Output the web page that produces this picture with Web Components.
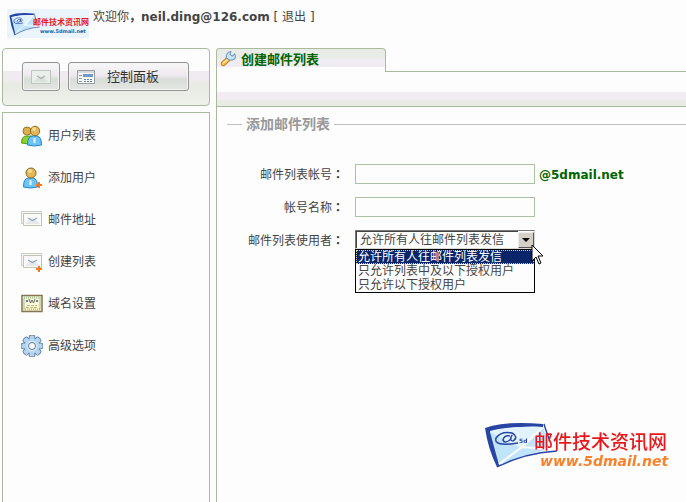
<!DOCTYPE html>
<html lang="zh-CN">
<head>
<meta charset="utf-8">
<title>创建邮件列表</title>
<style>
  html {
    background: #fdfdfd;
  }
  body {
    margin: 0;
    color: #444;
    font: 12px/16px "DejaVu Sans", "Noto Sans CJK SC", sans-serif;
    --line: #a9bb9c;
    --green: #006400;
  }
</style>
</head>
<body>
<mail-admin></mail-admin>

<script>
/* global customElements HTMLElement */
const envelope = `
  <path d="M1 7 Q20 0 59 3 L59 6 Q25 5 6 10 L17 44 L13 46 Q4 28 1 7Z" fill="#2845a5"/>
  <path d="M6 11 Q28 5 59 6 L66 28 Q40 34 15 44Z" fill="#bfe4fb"/>
  <path d="M6 11 Q28 5 59 6 L38 28Z" fill="#e3f3fd"/>
  <path d="M15 43 L38 26 L66 28 M38 26 L58 7" fill="none" stroke="#fff" stroke-width="2"/>
  <path d="M13 46 Q40 32 73 30 M60 3 Q62 10 66 20" fill="none" stroke="#2845a5" stroke-width="1.4"/>
  <path d="M26 15 Q20 14 19 19 Q20 23 26 19 L28 14 Q25 20 29 20 Q35 16 28 12 Q17 10 12 17 Q9 26 34 22" fill="none" stroke="#2845a5" stroke-width="1.5"/>`;

const userBody = (x, bottom, colour, edge) => `
  <path d="M${x} ${bottom} Q${x} 11 ${x + 5} 11 H${x + 9} Q${x + 14} 11 ${x + 14} ${bottom} Q${x + 7} ${bottom + 2} ${x} ${bottom}Z" fill="${colour}" stroke="${edge}"/>`;
const plus = '<path d="M18 15v6M15 18h6" stroke="#f47a20" stroke-width="2"/>';
const letters = `
  <path d="M.5 2.500h20v12h-20z" fill="#f6f6f6" stroke="#ccc"/>
  <path d="M2.500 4.500h18v12h-18z" fill="#fafafa" stroke="#bcc6b5"/>
  <path d="M4 15l5-5h5l5 5z" fill="#e6e8ea"/>
  <path d="M7 9l4.500 2.500L16 9" fill="none" stroke="#8fa5bb" stroke-width="1.300"/>`;

// eight rounded teeth round the wheel
const gearTeeth = Array.from({ length: 8 }, (_, i) => `
  <rect x="8.500" y=".5" width="5" height="6" rx="1.500" transform="rotate(${i * 45} 11 11)"/>`).join('');

const icons = {
  users: `
    ${userBody(0.5, 18, '#8fd02c', '#4e9c17')}
    <circle cx="6" cy="6" r="4" fill="#dcb04c" stroke="#a07820"/>
    ${userBody(6.5, 20, '#6cc5f6', '#2684cc')}
    <circle cx="14" cy="6" r="4.700" fill="#e3b85a" stroke="#8f6a20"/>
    <circle cx="13" cy="4" r="2" fill="#f6dc92"/>
    <path d="M13.500 13v5" stroke="#e6f7ff" stroke-width="2"/>`,
  adduser: `
    ${userBody(2.5, 20, '#6cc5f6', '#2684cc')}
    <circle cx="10" cy="6" r="5" fill="#e3b85a" stroke="#8f6a20"/>
    <circle cx="9" cy="4" r="2" fill="#f6dc92"/>
    <path d="M9.500 13v5" stroke="#e6f7ff" stroke-width="2"/>${plus}`,
  mails: letters,
  addmail: letters + plus,
  domain: `
    <path d="M1 2.500h20v16H1z" fill="#f8f5cd" stroke="#857654" stroke-width="1.500"/>
    <path d="M3 4.500h16v12H3z" fill="none" stroke="#a9c29a" stroke-width="2" stroke-dasharray="1 1"/>
    <path d="M5 6h12v9H5z" fill="#fbf9e0"/>
    <path d="M8 6l1.500 4L11 7l1.500 3L14 6" fill="none" stroke="#6c6840"/>
    <path d="M5 8h2M15 8h2" stroke="#5b79bd" stroke-width="2"/>
    <path d="M6 12.500h10M5 14.500h12" stroke="#cdb77b" stroke-dasharray="3 1"/>`,
  gear: `
    <g fill="#b4d3ee" stroke="#54779f" stroke-width="1.600">${gearTeeth}</g>
    <circle cx="11" cy="11" r="8" fill="#b4d3ee" stroke="#54779f" stroke-width="1.300"/>
    <g fill="#b4d3ee">${gearTeeth}</g>
    <circle cx="11" cy="11" r="5.500" fill="#d6e9f8"/>
    <circle cx="11" cy="11" r="3.500" fill="#fdfdfd" stroke="#54779f"/>`,
  wrench: `
    <path d="M9 10 L3 15 Q0 18 3 20 Q5 21 8 18 L13 13Z" fill="#f8c654" stroke="#c47a25" stroke-width="1.300"/>
    <path d="M4 17l6-5" stroke="#fdeaa8" stroke-width="1.500"/>
    <path d="M8 10 Q8 3 14 2 L13 6 L16 8 L19 5 Q22 11 16 13 L12 13Z" fill="#c9e5f7" stroke="#6997bd" stroke-width="1.300"/>`,
  envelope: `
    <path d="M1.500 4.500h19v13h-19z" fill="#ebefeb" stroke="#bcc4bc"/>
    <path d="M3 16l6-5h4l6 5z" fill="#dce1dc"/>
    <path d="M7 10l4 2.500L15 10" fill="none" stroke="#a9b0a9" stroke-width="1.400"/>`,
  panel: `
    <path d="M1.500 4.500h17v13h-17z" fill="#f6f7f7" stroke="#969b9b"/>
    <path d="M2 5h16v2H2z" fill="#d7dbdc"/>
    <path d="M7 8h10v3H7z" fill="#6f99cb"/>
    <path d="M3 9.500h3M3 12.500h3M3 15.500h3" stroke="#929a9a"/>
    <path d="M8 13.500h9M8 15.500h9" stroke="#6c7fa4" stroke-dasharray="2 1"/>`
};

class MailIcon extends HTMLElement {
  connectedCallback() {
    const shadowRoot = this.attachShadow({ mode: 'open' });
    shadowRoot.innerHTML = `
    <style>
      :host { display: block; flex: none; width: 22px; height: 22px; }
      svg { display: block; }
    </style>
    <svg viewBox="0 0 22 22" width="100%" height="100%" aria-hidden="true">${icons[this.getAttribute('name')]}</svg>`;
  }
}

class MailBrand extends HTMLElement {
  connectedCallback() {
    const shadowRoot = this.attachShadow({ mode: 'open' });
    const small = this.hasAttribute('small');
    shadowRoot.innerHTML = `
    <style>
      :host { display: block; flex: none; }
      :host([small]) { background: #eaf4fd; }
      svg { display: block; }
      .name { fill: #e8191c; font-family: "Noto Sans CJK SC", sans-serif; }
      .site { font-family: "DejaVu Sans", sans-serif; font-weight: bold; }
    </style>
    ${small ? `
    <svg width="82" height="29" viewBox="0 0 82 29">
      <g transform="translate(2 3) scale(.42 .5)">${envelope}</g>
      <text class="name" x="26" y="16" font-size="8" font-weight="bold">邮件技术资讯网</text>
      <text class="site" x="33" y="24" font-size="5" fill="#1263a4">www.5dmail.net</text>
    </svg>` : `
    <svg width="190" height="50" viewBox="0 0 190 50">
      ${envelope}
      <text x="35" y="22" font-size="6" font-weight="bold" fill="#2845a5" font-family="DejaVu Sans">5d</text>
      <text class="name" x="50" y="28" font-size="19" font-weight="500">邮件技术资讯网</text>
      <text class="site" x="56" y="45" font-size="14" font-style="italic" fill="#f9812a">www.5dmail.net</text>
    </svg>`}`;
  }
}

class MailHeader extends HTMLElement {
  connectedCallback() {
    const shadowRoot = this.attachShadow({ mode: 'open' });
    shadowRoot.innerHTML = `
    <style>
      :host { display: flex; gap: 4px; padding: 9px 7px 10px; }
      a { color: inherit; text-decoration: none; }
    </style>
    <mail-brand small></mail-brand>
    <div>欢迎你<b>，neil.ding@126.com</b> [ <a href="#logout">退出</a> ]</div>`;
  }
}

class MailToolbar extends HTMLElement {
  connectedCallback() {
    const shadowRoot = this.attachShadow({ mode: 'open' });
    shadowRoot.innerHTML = `
    <style>
      :host {
        display: flex;
        gap: 8px;
        padding: 13px 20px 14px 19px;
        border: 1px solid var(--line);
        border-radius: 4px;
        background: linear-gradient(#fdfdfd 22px, #f0ebf1 22px, #f0ebf1 30px, #e8ebe4 36px, #eef0ea);
      }
      button {
        display: flex;
        align-items: center;
        justify-content: center;
        height: 29px;
        padding: 0 7px;
        border: 1px solid #939593;
        border-radius: 3px;
        background: linear-gradient(#f8f8f8, #eee9ef 45%, #d9ddd8 60%, #e3e6e2);
        box-shadow: inset 0 0 0 1px #f5f5f5;
        color: #333;
        font: inherit;
        font-size: 13px;
      }
      .panel { flex: 1; justify-content: flex-start; gap: 9px; }
    </style>
    <button aria-label="邮件"><mail-icon name="envelope"></mail-icon></button>
    <button class="panel"><mail-icon name="panel"></mail-icon>控制面板</button>`;
  }
}

class MailMenu extends HTMLElement {
  connectedCallback() {
    const shadowRoot = this.attachShadow({ mode: 'open' });
    const items = [
      ['users', '用户列表'],
      ['adduser', '添加用户'],
      ['mails', '邮件地址'],
      ['addmail', '创建列表'],
      ['domain', '域名设置'],
      ['gear', '高级选项']
    ];
    shadowRoot.innerHTML = `
    <style>
      :host { display: block; flex: 1; padding: 12px 18px; border: 1px solid var(--line); border-bottom: 0; }
      nav { display: flex; flex-direction: column; gap: 20px; }
      a { display: flex; align-items: center; gap: 5px; color: inherit; text-decoration: none; }
    </style>
    <nav>${items.map(([icon, text]) => `
      <a href="#${icon}"><mail-icon name="${icon}"></mail-icon>${text}</a>`).join('')}
    </nav>`;
  }
}

class MailTab extends HTMLElement {
  connectedCallback() {
    const shadowRoot = this.attachShadow({ mode: 'open' });
    shadowRoot.innerHTML = `
    <style>
      :host { display: flex; height: 24px; }
      h1 {
        display: flex;
        box-sizing: border-box;
        width: 170px;
        gap: 4px;
        margin: 0;
        padding: 1px 3px;
        border: 1px solid var(--line);
        border-bottom: 0;
        border-radius: 4px 4px 0 0;
        background: linear-gradient(#e8ebe6 10px, #f1ecf2 10px, #f1ecf2 18px, #fdfdfd 18px);
        color: var(--green);
        font-size: 13px;
        line-height: 20px;
      }
      mail-icon { width: 17px; height: 17px; }
      span { flex: 1; border-bottom: 1px solid var(--line); }
    </style>
    <h1><mail-icon name="wrench"></mail-icon><slot></slot></h1><span></span>`;
  }
}

class MailSelect extends HTMLElement {
  connectedCallback() {
    const shadowRoot = this.attachShadow({ mode: 'open' });
    const options = ['允许所有人往邮件列表发信', '只允许列表中及以下授权用户', '只允许以下授权用户'];
    shadowRoot.innerHTML = `
    <style>
      :host { display: block; position: relative; width: 180px; }
      .box { display: flex; border: 1px solid #d8d8d4; border-top-color: #777; border-left-color: #777; }
      select {
        appearance: none;
        flex: 1;
        min-width: 0;
        height: 17px;
        padding: 0 3px;
        border: 1px solid #444;
        border-width: 1px 0 0 1px;
        border-radius: 0;
        outline: 0;
        background: #fdfdfd;
        color: inherit;
        font: inherit;
      }
      .arrow {
        display: flex;
        align-items: center;
        justify-content: center;
        width: 14px;
        margin-top: 1px;
        border: 1px solid #eee;
        border-right-color: #555;
        border-bottom-color: #555;
        background: #d4d0c8;
        pointer-events: none;
      }
      ul {
        position: absolute;
        top: 19px;
        left: 0;
        right: 0;
        margin: 0;
        padding: 0;
        border: 1px solid #000;
        background: #fdfdfd;
        list-style: none;
        line-height: 14px;
      }
      li { padding: 0 2px; white-space: nowrap; }
      li[aria-selected=true] { outline: 1px dotted #e3d56b; outline-offset: -1px; background: #0a246a; color: #fff; }
      .cursor { position: absolute; top: 14px; right: -9px; }
    </style>
    <div class="box">
      <select aria-label="邮件列表使用者">${options.map(text => `<option>${text}</option>`).join('')}</select>
      <span class="arrow"><svg width="8" height="4"><path d="M0 0h8L4 4z"/></svg></span>
    </div>
    <ul role="listbox">${options.map((text, i) => `<li role="option" aria-selected="${i === 0}">${text}</li>`).join('')}</ul>
    <svg class="cursor" width="13" height="21" viewBox="0 0 13 21">
      <path d="M1 1v16l4-4 3 7 2-1-3-7h5z" fill="#fff" stroke="#000"/>
    </svg>`;
  }
}

class MailForm extends HTMLElement {
  connectedCallback() {
    const shadowRoot = this.attachShadow({ mode: 'open' });
    shadowRoot.innerHTML = `
    <style>
      :host { display: block; padding: 9px 0 0 10px; }
      fieldset { margin: 0; padding: 0; border: 0; border-top: 1px solid #c0c0c0; }
      legend { margin-left: 15px; padding: 0 4px; color: #999; font-size: 14px; font-weight: bold; line-height: 16px; }
      form {
        display: grid;
        grid-template-columns: 117px 1fr;
        column-gap: 11px;
        row-gap: 13px;
        align-items: start;
        padding-top: 32px;
      }
      label { padding-top: 3px; text-align: right; white-space: nowrap; }
      b { font-family: "Noto Sans CJK TC", sans-serif; line-height: 12px; }
      .field { display: flex; gap: 4px; }
      input {
        box-sizing: border-box;
        width: 180px;
        height: 20px;
        margin: 0;
        border: 1px solid #adc2a3;
        background: #fdfdfd;
        font: inherit;
      }
      strong { padding-top: 3px; color: var(--green); }
    </style>
    <fieldset>
      <legend>添加邮件列表</legend>
      <form>
        <label for="account">邮件列表帐号<b lang="zh-TW">：</b></label>
        <div class="field"><input id="account"><strong>@5dmail.net</strong></div>
        <label for="name">帐号名称<b lang="zh-TW">：</b></label>
        <div class="field"><input id="name"></div>
        <label class="for-select">邮件列表使用者<b lang="zh-TW">：</b></label>
        <mail-select></mail-select>
      </form>
    </fieldset>`;
    // a for attribute cannot point into another shadow root
    this.select = shadowRoot.querySelector('mail-select');
    shadowRoot.querySelector('.for-select').addEventListener('click', () => {
      this.select.shadowRoot.querySelector('select').focus();
    });
  }
}

class MailAdmin extends HTMLElement {
  connectedCallback() {
    const shadowRoot = this.attachShadow({ mode: 'open' });
    shadowRoot.innerHTML = `
    <style>
      :host { display: flex; flex-direction: column; min-height: 100vh; }
      .columns { display: flex; flex: 1; gap: 6px; padding-left: 2px; }
      aside { display: flex; flex-direction: column; width: 208px; gap: 6px; }
      main { display: flex; flex: 1; flex-direction: column; min-width: 0; }
      .content { flex: 1; border-left: 1px solid var(--line); }
      .strip {
        height: 34px;
        border-bottom: 1px solid var(--line);
        background: linear-gradient(#fdfdfd 20px, #f1ecf2 20px, #f1ecf2 28px, #e8ebe6 28px);
      }
      .watermark { position: fixed; right: 12px; bottom: 31px; }
    </style>
    <mail-header></mail-header>
    <div class="columns">
      <aside><mail-toolbar></mail-toolbar><mail-menu></mail-menu></aside>
      <main>
        <mail-tab>创建邮件列表</mail-tab>
        <div class="content"><div class="strip"></div><mail-form></mail-form></div>
      </main>
    </div>
    <mail-brand class="watermark"></mail-brand>`;
  }
}

customElements.define('mail-icon', MailIcon);
customElements.define('mail-brand', MailBrand);
customElements.define('mail-header', MailHeader);
customElements.define('mail-toolbar', MailToolbar);
customElements.define('mail-menu', MailMenu);
customElements.define('mail-tab', MailTab);
customElements.define('mail-select', MailSelect);
customElements.define('mail-form', MailForm);
customElements.define('mail-admin', MailAdmin);
</script>
</body>
</html>
